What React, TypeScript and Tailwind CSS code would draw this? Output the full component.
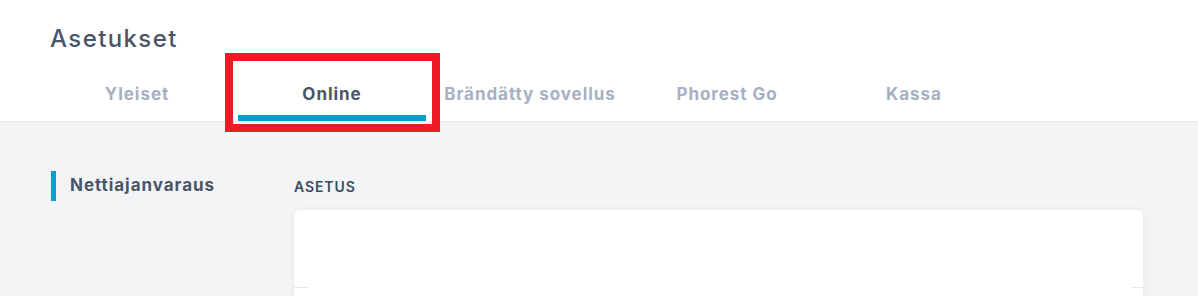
import React from 'react';

const tabs = [
  { label: 'Yleiset', cls: 'ml-[43px] w-[188px]' },
  { label: 'Online', cls: 'ml-[7px] w-[188px]', active: true },
  { label: 'Brändätty sovellus', cls: 'ml-[10px] w-[188px]' },
  { label: 'Phorest Go', cls: 'ml-[9px] w-[188px]' },
  { label: 'Kassa', cls: 'ml-0 w-[186px]' },
];

const App: React.FC = () => {
  return (
    <div className="relative h-[296px] w-[1198px] overflow-hidden bg-[#f3f4f6] font-['Inter',sans-serif]">
      {/* header */}
      <div className="relative z-10 h-[121px] bg-white shadow-[0_1px_3px_rgba(0,0,0,0.06)]">
        <h1 className="pl-[50px] pt-[24px] text-[24px] leading-[30px] font-medium tracking-[1.4px] text-[#4a5568]">
          Asetukset
        </h1>
        <div className="mt-[25px] flex">
          {tabs.map((t) => (
            <div key={t.label} className={`${t.cls} flex h-[42px] flex-col items-center`}>
              <span
                className={`pt-[4px] text-[17px] leading-[22px] font-bold tracking-[0.95px] ${
                  t.active ? 'text-[#4a5568]' : 'text-[#a6b0c2]'
                }`}
              >
                {t.label}
              </span>
              {t.active && <div className="mt-auto h-[6px] w-full bg-[#009fd4]" />}
            </div>
          ))}
        </div>
      </div>

      {/* body */}
      <div className="flex pt-[50px]">
        <div className="ml-[51px] w-[243px] shrink-0">
          <div className="flex h-[30px] items-center">
            <div className="h-[30px] w-[5px] bg-[#009fd4]" />
            <span className="ml-[14px] text-[17px] font-bold tracking-[0.95px] text-[#4a5568]">
              Nettiajanvaraus
            </span>
          </div>
        </div>
        <div className="w-[849px]">
          <div className="flex h-[30px] items-center">
            <span className="text-[14px] font-semibold uppercase tracking-[0.9px] text-[#3d4a5c]">Asetus</span>
          </div>
          <div className="mt-[9px] h-[120px] rounded-[6px] bg-white shadow-[0_0_6px_rgba(0,0,0,0.06)]">
            <div className="flex pt-[77px]">
              <div className="h-px w-[15px] bg-[#e5e7eb]" />
              <div className="flex-1" />
              <div className="h-px w-[11px] bg-[#e5e7eb]" />
            </div>
          </div>
        </div>
      </div>

      {/* highlight annotation */}
      <div className="pointer-events-none absolute left-[225px] top-[53px] z-20 h-[79px] w-[215px] border-[8px] border-[#ed1c24]" />
    </div>
  );
};

export default App;
